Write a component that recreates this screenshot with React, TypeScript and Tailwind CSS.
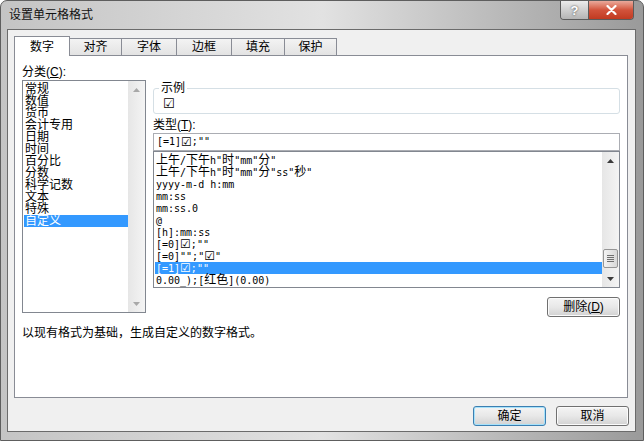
import React from 'react';

const categories = ['常规', '数值', '货币', '会计专用', '日期', '时间', '百分比', '分数', '科学记数', '文本', '特殊', '自定义'];

const formats = [
  '上午/下午h"时"mm"分"',
  '上午/下午h"时"mm"分"ss"秒"',
  'yyyy-m-d h:mm',
  'mm:ss',
  'mm:ss.0',
  '@',
  '[h]:mm:ss',
  '[=0]☑;""',
  '[=0]"";"☑"',
  '[=1]☑;""',
  '0.00_);[红色](0.00)',
];

const tabs = [
  { label: '数字', w: 'w-[56px]' },
  { label: '对齐', w: 'w-[53px]' },
  { label: '字体', w: 'w-[56px]' },
  { label: '边框', w: 'w-[56px]' },
  { label: '填充', w: 'w-[54px]' },
  { label: '保护', w: 'w-[53px]' },
];

// format codes mix half-width latin with CJK, so render them in runs
function FormatText({ text }: { text: string }) {
  const parts = text.match(/[\u4e00-\u9fff]+|\u2611|[^\u4e00-\u9fff\u2611]+/g) ?? [];
  return (
    <>
      {parts.map((p, i) => {
        if (p === '☑') {
          return (
            <span key={i} className="font-['DejaVu_Sans',sans-serif] text-[12px] font-bold">
              ☑
            </span>
          );
        }
        if (/[\u4e00-\u9fff]/.test(p)) return <span key={i}>{p}</span>;
        return (
          <span key={i} className="font-['DejaVu_Sans_Mono',monospace] text-[10px]">
            {p}
          </span>
        );
      })}
    </>
  );
}

function Arrow({ up, muted }: { up?: boolean; muted?: boolean }) {
  return (
    <div className="flex h-[17px] items-center justify-center">
      <svg width="7" height="4" viewBox="0 0 7 4">
        <path d={up ? 'M0 4 L3.5 0 L7 4 Z' : 'M0 0 L3.5 4 L7 0 Z'} fill={muted ? '#a8a8a8' : '#3b3b3b'} />
      </svg>
    </div>
  );
}

function Scrollbar({ thumb, muted }: { thumb?: boolean; muted?: boolean }) {
  return (
    <div className="flex w-[17px] flex-col bg-gradient-to-r from-[#e6e6e6] to-[#f4f4f4]">
      <Arrow up muted={muted} />
      <div className="flex flex-1 flex-col justify-end px-px pb-[2px]">
        {thumb && (
          <div className="flex h-[19px] flex-col items-center justify-center gap-px rounded-[2px] border border-[#959595] bg-gradient-to-r from-[#f3f3f3] to-[#d8d8d8]">
            <div className="h-px w-[7px] bg-[#6f6f6f]" />
            <div className="h-px w-[7px] bg-[#6f6f6f]" />
            <div className="h-px w-[7px] bg-[#6f6f6f]" />
            <div className="h-px w-[7px] bg-[#6f6f6f]" />
          </div>
        )}
      </div>
      <Arrow muted={muted} />
    </div>
  );
}

function Button({ children, primary }: { children: React.ReactNode; primary?: boolean }) {
  return (
    <div
      className={`flex h-[20px] w-[73px] items-center justify-center rounded-[3px] border bg-gradient-to-b from-[#f4f4f4] via-[#e8e8e8] to-[#d2d2d2] leading-[12px] ${
        primary ? 'border-[#3c7fb1] shadow-[inset_0_0_0_1px_#a6e2fb]' : 'border-[#707070] shadow-[inset_0_0_0_1px_#fbfbfb]'
      }`}
    >
      {children}
    </div>
  );
}

export default function App() {
  return (
    <div className="h-[441px] w-[644px] bg-white font-['Liberation_Sans','Noto_Sans_CJK_SC',sans-serif] text-[12px] text-black">
      <div className="flex h-full w-full flex-col rounded-t-[7px] border border-[#5e5e5e] bg-gradient-to-r from-[#c4c4c4] via-[#e2e2e2] to-[#9a9a9a]">
        {/* Title bar */}
        <div className="flex h-[28px] items-start">
          <span className="ml-[8px] mt-[7px] leading-[14px] text-[#111]">设置单元格格式</span>
          <div className="ml-auto mr-[9px] flex h-[19px] overflow-hidden rounded-b-[4px] border border-t-0 border-[#5b5b5b]">
            <div className="flex w-[28px] items-center justify-center border-r border-[#5b5b5b] bg-gradient-to-b from-[#ececec] via-[#cfcfcf] to-[#b4b4b4] text-[13px] font-bold leading-[13px] text-white [text-shadow:0_0_2px_#333]">
              ?
            </div>
            <div className="flex w-[44px] items-center justify-center bg-gradient-to-b from-[#e9a99b] via-[#d2533b] to-[#c13a20]">
              <svg width="11" height="10" viewBox="0 0 11 10">
                <path d="M1.5 1 L9.5 9 M9.5 1 L1.5 9" stroke="#ffffff" strokeWidth="2.2" strokeLinecap="round" />
              </svg>
            </div>
          </div>
        </div>

        {/* Client area */}
        <div className="mb-[8px] ml-[6px] mr-[7px] flex flex-1 flex-col border border-[#6b6b6b] bg-[#f0f0f0] pl-[6px] pr-[6px] pt-[6px]">
          {/* Tabs */}
          <div className="flex h-[19px] items-end">
            {tabs.map((t, i) =>
              i === 0 ? (
                <div
                  key={t.label}
                  className={`relative z-10 -mb-px flex h-[20px] ${t.w} items-start justify-center border border-b-0 border-[#898c95] bg-white pt-[3px] leading-[14px]`}
                >
                  {t.label}
                </div>
              ) : (
                <div
                  key={t.label}
                  className={`-ml-px flex h-[17px] ${t.w} items-start justify-center border border-b-0 border-[#898c95] bg-gradient-to-b from-[#f3f3f3] to-[#e3e3e3] pt-[1px] leading-[14px]`}
                >
                  {t.label}
                </div>
              )
            )}
          </div>

          {/* Tab panel */}
          <div className="flex h-[343px] w-[614px] flex-col border border-[#898c95] bg-white pl-[7px] pt-[9px]">
            <div className="flex items-start gap-[7px]">
              {/* Category column */}
              <div className="flex w-[124px] flex-col">
                <div className="h-[14px] leading-[14px]">
                  分类(<span className="underline">C</span>):
                </div>
                <div className="mt-px flex h-[233px] border border-[#828790] bg-white">
                  <div className="flex-1 pl-px pt-[2px]">
                    {categories.map((c, i) => (
                      <div
                        key={c}
                        className={`h-[12px] whitespace-nowrap pl-px leading-[12px] ${
                          i === categories.length - 1 ? 'bg-[#3399ff] text-white' : ''
                        }`}
                      >
                        {c}
                      </div>
                    ))}
                  </div>
                  <Scrollbar muted />
                </div>
              </div>

              {/* Right column */}
              <div className="flex w-[467px] flex-col">
                <div className="relative mt-[23px] h-[26px] rounded-[3px] border border-[#d5dfe5] pl-[9px] pt-[8px]">
                  <span className="absolute -top-[8px] left-[5px] bg-white px-[2px] leading-[14px]">示例</span>
                  <div className="font-['DejaVu_Sans',sans-serif] text-[13px] font-bold leading-[13px]">☑</div>
                </div>
                <div className="mt-[4px] h-[14px] leading-[14px]">
                  类型(<span className="underline">T</span>):
                </div>
                <div className="mt-px flex h-[18px] items-center border border-[#abadb3] pl-[3px] leading-[12px]">
                  <FormatText text={'[=1]☑;""'} />
                </div>
                <div className="flex h-[137px] border border-[#828790] bg-white">
                  <div className="flex-1 pl-px pt-[2px]">
                    {formats.map((f, i) => (
                      <div
                        key={f}
                        className={`h-[12px] whitespace-nowrap pl-px leading-[12px] ${
                          i === 9 ? 'bg-[#3399ff] text-white' : ''
                        }`}
                      >
                        <FormatText text={f} />
                      </div>
                    ))}
                  </div>
                  <Scrollbar thumb />
                </div>
                <div className="mt-[9px] self-end">
                  <Button>
                    删除(<span className="underline">D</span>)
                  </Button>
                </div>
              </div>
            </div>

            <div className="mt-[9px] leading-[14px]">以现有格式为基础，生成自定义的数字格式。</div>
          </div>

          {/* Dialog buttons */}
          <div className="mt-[8px] flex justify-end gap-[10px]">
            <Button primary>确定</Button>
            <Button>取消</Button>
          </div>
        </div>
      </div>
    </div>
  );
}
